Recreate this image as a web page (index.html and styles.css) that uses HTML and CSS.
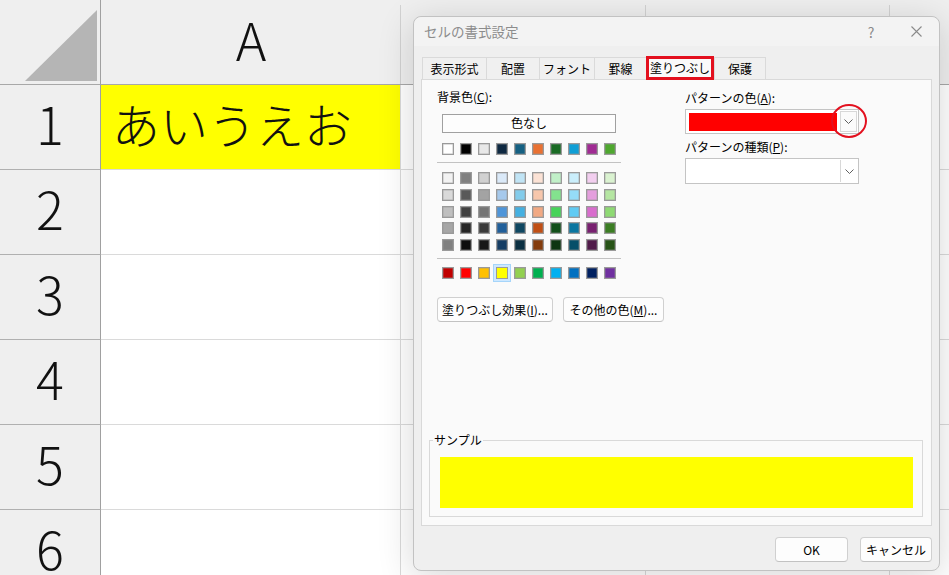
FILE: index.html
```html
<!DOCTYPE html>
<html lang="ja">
<head>
<meta charset="utf-8">
<title>セルの書式設定</title>
<link rel="stylesheet" href="styles.css">
</head>
<body>
<div class="sheet">
  <div class="corner"><svg width="100" height="84" viewBox="0 0 100 84"><polygon points="97,10 97,81 25,81" fill="#b5b5b5"/></svg></div>
  <div class="colhead">A</div>
  <div class="colhead"></div>
  <div class="colhead"></div>
  <div class="colhead"></div>

  <div class="rowhead">1</div><div class="cell fill">あいうえお</div><div class="cell"></div><div class="cell"></div><div class="cell"></div>
  <div class="rowhead">2</div><div class="cell"></div><div class="cell"></div><div class="cell"></div><div class="cell"></div>
  <div class="rowhead">3</div><div class="cell"></div><div class="cell"></div><div class="cell"></div><div class="cell"></div>
  <div class="rowhead">4</div><div class="cell"></div><div class="cell"></div><div class="cell"></div><div class="cell"></div>
  <div class="rowhead">5</div><div class="cell"></div><div class="cell"></div><div class="cell"></div><div class="cell"></div>
  <div class="rowhead">6</div><div class="cell"></div><div class="cell"></div><div class="cell"></div><div class="cell"></div>
</div>

<div class="dialog">
  <div class="titlebar">
    <span class="title">セルの書式設定</span>
    <span class="tbtn">?</span>
    <span class="tbtn"><svg width="11" height="11" viewBox="0 0 11 11"><path d="M0.5 0.5L10.5 10.5M10.5 0.5L0.5 10.5" stroke="#8a8a8a" stroke-width="1.1"/></svg></span>
  </div>

  <div class="tabs">
    <div class="tab w64">表示形式</div>
    <div class="tab w53">配置</div>
    <div class="tab w55">フォント</div>
    <div class="tab w52">罫線</div>
    <div class="tab active">塗りつぶし</div>
    <div class="tab w52 lasttab">保護</div>
  </div>

  <div class="panel">
    <div class="top">
      <div class="leftcol">
        <div class="label">背景色(<u>C</u>):</div>
        <div class="nocolor">色なし</div>
        <div class="swrow theme">
          <span class="sw" style="background:#ffffff"></span><span class="sw" style="background:#000000"></span><span class="sw" style="background:#e8e8e8"></span><span class="sw" style="background:#0e2841"></span><span class="sw" style="background:#156082"></span><span class="sw" style="background:#e97132"></span><span class="sw" style="background:#196b24"></span><span class="sw" style="background:#0f9ed5"></span><span class="sw" style="background:#a02b93"></span><span class="sw" style="background:#4ea72e"></span>
        </div>
        <div class="sep"></div>
        <div class="swgrid">
          <span class="sw" style="background:#f2f2f2"></span><span class="sw" style="background:#7f7f7f"></span><span class="sw" style="background:#d1d1d1"></span><span class="sw" style="background:#dae9f8"></span><span class="sw" style="background:#c0e4f5"></span><span class="sw" style="background:#fbe2d5"></span><span class="sw" style="background:#c1f0c8"></span><span class="sw" style="background:#caeefb"></span><span class="sw" style="background:#f2ceef"></span><span class="sw" style="background:#daf2d0"></span>
          <span class="sw" style="background:#d9d9d9"></span><span class="sw" style="background:#595959"></span><span class="sw" style="background:#a3a3a3"></span><span class="sw" style="background:#a6c9ec"></span><span class="sw" style="background:#83cceb"></span><span class="sw" style="background:#f7c7ac"></span><span class="sw" style="background:#83e28e"></span><span class="sw" style="background:#95dcf7"></span><span class="sw" style="background:#e49edd"></span><span class="sw" style="background:#b5e6a2"></span>
          <span class="sw" style="background:#bfbfbf"></span><span class="sw" style="background:#404040"></span><span class="sw" style="background:#757575"></span><span class="sw" style="background:#4e95d9"></span><span class="sw" style="background:#45b0e1"></span><span class="sw" style="background:#f1a983"></span><span class="sw" style="background:#47d359"></span><span class="sw" style="background:#61cbf3"></span><span class="sw" style="background:#d86dcd"></span><span class="sw" style="background:#8ed973"></span>
          <span class="sw" style="background:#a6a6a6"></span><span class="sw" style="background:#262626"></span><span class="sw" style="background:#3a3a3a"></span><span class="sw" style="background:#215f9a"></span><span class="sw" style="background:#0f4761"></span><span class="sw" style="background:#c04f15"></span><span class="sw" style="background:#124f1a"></span><span class="sw" style="background:#0b76a0"></span><span class="sw" style="background:#782170"></span><span class="sw" style="background:#3b7d23"></span>
          <span class="sw" style="background:#808080"></span><span class="sw" style="background:#0d0d0d"></span><span class="sw" style="background:#171717"></span><span class="sw" style="background:#153d64"></span><span class="sw" style="background:#0a2f41"></span><span class="sw" style="background:#843c0c"></span><span class="sw" style="background:#0d3512"></span><span class="sw" style="background:#074f69"></span><span class="sw" style="background:#511b4a"></span><span class="sw" style="background:#275317"></span>
        </div>
        <div class="sep sep2"></div>
        <div class="swrow std">
          <span class="sw" style="background:#c00000"></span><span class="sw" style="background:#ff0000"></span><span class="sw" style="background:#ffc000"></span><span class="sw selected" style="background:#ffff00"></span><span class="sw" style="background:#92d050"></span><span class="sw" style="background:#00b050"></span><span class="sw" style="background:#00b0f0"></span><span class="sw" style="background:#0070c0"></span><span class="sw" style="background:#002060"></span><span class="sw" style="background:#7030a0"></span>
        </div>
        <div class="btnrow">
          <div class="btn b1">塗りつぶし効果(<u>I</u>)...</div>
          <div class="btn b2">その他の色(<u>M</u>)...</div>
        </div>
      </div>
      <div class="rightcol">
        <div class="label">パターンの色(<u>A</u>):</div>
        <div class="combo">
          <div class="val red"></div>
          <div class="drop boxed"><svg width="9" height="5" viewBox="0 0 9 5"><path d="M0.5 0.5L4.5 4.5L8.5 0.5" fill="none" stroke="#606060" stroke-width="1"/></svg></div>
          <div class="ring"></div>
        </div>
        <div class="label l2">パターンの種類(<u>P</u>):</div>
        <div class="combo c2">
          <div class="val"></div>
          <div class="drop line"><svg width="9" height="5" viewBox="0 0 9 5"><path d="M0.5 0.5L4.5 4.5L8.5 0.5" fill="none" stroke="#606060" stroke-width="1"/></svg></div>
        </div>
      </div>
    </div>
    <fieldset class="sample">
      <legend>サンプル</legend>
      <div class="preview"></div>
    </fieldset>
  </div>

  <div class="footer">
    <div class="btn ok">OK</div>
    <div class="btn cancel">キャンセル</div>
  </div>
</div>
</body>
</html>
```
FILE: styles.css
```css
* { box-sizing: border-box; }
html, body { margin: 0; padding: 0; }
body {
  width: 949px;
  height: 575px;
  overflow: hidden;
  background: #ffffff;
  font-family: "Noto Sans CJK JP", "Noto Sans", sans-serif;
  position: relative;
}

/* spreadsheet */
.sheet {
  display: grid;
  grid-template-columns: 101px 300px 245px 244px 80px;
  grid-template-rows: 85px repeat(6, 85px);
}
.corner {
  background: #efefef;
  border-bottom: 1px solid #a8a8a8;
  border-right: 1px solid #a0a0a0;
}
.corner svg { display: block; }
.colhead {
  background: #efefef linear-gradient(#d2d2d2, #d2d2d2) right 5px / 1px calc(100% - 5px) no-repeat;
  border-bottom: 1px solid #a8a8a8;
  display: flex;
  align-items: center;
  justify-content: center;
  font-size: 52px;
  font-weight: 300;
  color: #111;
  padding-bottom: 8px;
}
.rowhead {
  background: #efefef;
  border-right: 1px solid #a0a0a0;
  border-bottom: 1px solid #b0b0b0;
  display: flex;
  align-items: center;
  justify-content: center;
  font-size: 52px;
  font-weight: 300;
  color: #111;
  padding-bottom: 10px;
}
.cell {
  border-right: 1px solid #dadada;
  border-bottom: 1px solid #dadada;
}
.cell.fill {
  background: #ffff00;
  font-size: 48px;
  font-weight: 300;
  color: #111;
  display: flex;
  align-items: center;
  padding-left: 11px;
  padding-bottom: 8px;
  letter-spacing: 0;
}

/* dialog */
.dialog {
  position: absolute;
  left: 413px;
  top: 16px;
  width: 527px;
  height: 555px;
  background: #efefef;
  border: 1px solid #c2c2c2;
  border-radius: 8px;
  box-shadow: 0 6px 36px rgba(0, 0, 0, 0.16);
  display: flex;
  flex-direction: column;
  font-size: 12px;
  color: #000;
  overflow: hidden;
}
.titlebar {
  height: 29px;
  flex: none;
  background: #f3f3f3;
  display: flex;
  align-items: center;
  padding-left: 10px;
  border-radius: 8px 8px 0 0;
}
.title {
  flex: 1;
  font-size: 13.5px;
  color: #8c8c8c;
  line-height: 20px;
  padding-bottom: 1px;
}
.tbtn {
  width: 46px;
  height: 29px;
  display: flex;
  align-items: center;
  justify-content: center;
  color: #8a8a8a;
  font-size: 14px;
}
.tbtn:last-child { width: 45px; }

.tabs {
  display: flex;
  align-items: flex-end;
  margin: 10px 0 -1px 8px;
  height: 24px;
  position: relative;
  z-index: 1;
}
.tab {
  height: 23px;
  border: 1px solid #dadada;
  border-right: none;
  background: #f0f0f0;
  display: flex;
  align-items: center;
  justify-content: center;
  line-height: 16px;
  padding-top: 1px;
}
.w64 { width: 64px; }
.w53 { width: 53px; }
.w55 { width: 55px; }
.w52 { width: 52px; }
.tab.lasttab { border-right: 1px solid #dadada; }
.tab.active {
  width: 68px;
  height: 24px;
  background: #fafafa;
  border: 3px solid #e3101e;
  padding-top: 0;
}

.panel {
  flex: none;
  height: 447px;
  margin: 0 7px;
  background: #fafafa;
  border: 1px solid #d9d9d9;
  display: flex;
  flex-direction: column;
}
.top {
  display: grid;
  grid-template-columns: 263px 1fr;
}
.leftcol { padding-left: 15px; }
.label {
  line-height: 16px;
  margin-top: 9px;
  white-space: nowrap;
}
.nocolor {
  margin: 9px 0 0 5px;
  width: 174px;
  height: 19px;
  border: 1px solid #a0a0a0;
  background: #fdfdfd;
  text-align: center;
  line-height: 16px;
}
.swrow {
  display: flex;
  gap: 6px;
  margin-left: 5px;
}
.swrow.theme { margin-top: 10px; }
.swrow.std { margin-top: 8px; }
.sw {
  display: block;
  width: 12px;
  height: 12px;
  border: 1px solid #9a9a9a;
  box-shadow: inset 0 0 0 0.5px rgba(150, 150, 150, 0.6);
}
.sw.selected {
  outline: 2px solid #cde8ff;
  box-shadow: 0 0 0 3px #a6d5fa;
}
.sep {
  margin-top: 7px;
  width: 184px;
  height: 1px;
  background: #c2c2c2;
}
.sep2 { margin-top: 7px; }
.swgrid {
  display: grid;
  grid-template-columns: repeat(10, 12px);
  column-gap: 6px;
  row-gap: 4.75px;
  margin: 9px 0 0 5px;
}
.btnrow {
  display: flex;
  gap: 10px;
  margin-top: 18px;
}
.btn {
  height: 25px;
  border: 1px solid #d0d0d0;
  border-bottom-color: #c2c2c2;
  border-radius: 4px;
  background: #fdfdfd;
  display: flex;
  align-items: center;
  justify-content: center;
  line-height: 16px;
  white-space: nowrap;
}
.b1 { width: 116px; }
.b2 { width: 101px; }

.rightcol { padding-top: 1px; }
.combo {
  position: relative;
  margin-top: 3px;
  width: 174px;
  height: 25px;
  border: 1px solid #c4c4c4;
  background: #ffffff;
  display: flex;
  padding: 3px 1px 2px 3px;
  gap: 3px;
}
.combo .val { flex: 1; }
.combo .val.red { background: #ff0000; }
.drop {
  width: 17px;
  display: flex;
  align-items: center;
  justify-content: center;
}
.drop.boxed {
  margin: -2px 0 -1px;
  border: 1px solid #d8d8d8;
  background: #fbfbfb;
}
.combo.c2 {
  height: 26px;
  margin-top: 3px;
  padding: 1px 1px 1px 3px;
}
.drop.line { border-left: 1px solid #d8d8d8; }
.label.l2 { margin-top: 5px; }
.ring {
  position: absolute;
  left: 145px;
  top: -6px;
  width: 36px;
  height: 34px;
  border: 2px solid #e3101e;
  border-radius: 50%;
}

.sample {
  margin: auto 8px 8px 7px;
  border: 1px solid #d9d9d9;
  padding: 9px 9px 8px 10px;
  min-width: 0;
}
.sample legend {
  margin-left: -7px;
  padding: 0 1px;
  line-height: 16px;
  font-size: 12px;
}
.preview {
  height: 51px;
  background: #ffff00;
}

.footer {
  display: flex;
  justify-content: flex-end;
  gap: 12px;
  margin-top: 11px;
  padding-right: 7px;
}
.ok { width: 73px; }
.cancel { width: 72px; }
```
